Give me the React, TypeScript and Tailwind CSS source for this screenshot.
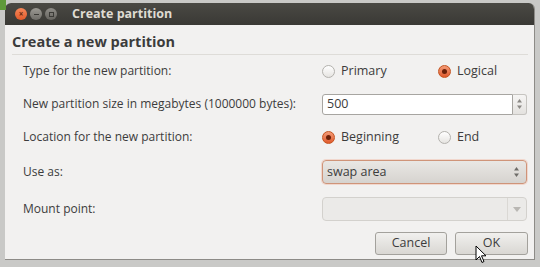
import React from "react";

const font = { fontFamily: "'Open Sans', 'Noto Sans', sans-serif" };

function Radio({ checked, label, w = "w-auto" }: { checked?: boolean; label: string; w?: string }) {
  return (
    <div className={`flex items-center gap-[6px] shrink-0 ${w}`}>
      {checked ? (
        <span className="w-[13px] h-[13px] rounded-full border border-[#c4531f] bg-gradient-to-b from-[#f39b77] to-[#e0592a] flex items-center justify-center">
          <span className="w-[5px] h-[5px] rounded-full bg-[#6a2008]" />
        </span>
      ) : (
        <span className="w-[13px] h-[13px] rounded-full border border-[#b3b1ad] bg-gradient-to-b from-[#ffffff] to-[#e6e4e1]" />
      )}
      <span className="text-[12.5px] text-[#3c3c3c]">{label}</span>
    </div>
  );
}

function Arrows({ color = "#777" }: { color?: string }) {
  return (
    <svg width="7" height="12" viewBox="0 0 7 12">
      <path d="M3.5 1 L6 4.5 L1 4.5 Z" fill={color} />
      <path d="M3.5 11 L6 7.5 L1 7.5 Z" fill={color} />
    </svg>
  );
}

function Row({ label, children, mt }: { label: string; children?: React.ReactNode; mt: string }) {
  return (
    <div className={`flex items-center h-[24px] ${mt}`}>
      <div className="w-[317px] shrink-0 pl-[18px] text-[12px] text-[#3c3c3c] whitespace-nowrap">{label}</div>
      <div className="flex items-center">{children}</div>
    </div>
  );
}

export default function App() {
  return (
    <div className="w-[540px] h-[267px] bg-[#c9c9c7] overflow-hidden relative" style={font}>
      <div className="absolute left-0 top-0 w-[6px] h-[10px] bg-[#5f9a3a]" />
      <div className="ml-[5px] mt-[3px] w-[530px] h-[257px] rounded-t-[6px] bg-[#f2f1f0] border-b border-r border-[#8d8b87] flex flex-col overflow-hidden">
        {/* title bar */}
        <div className="h-[22px] bg-gradient-to-b from-[#4a4944] to-[#3a3935] flex items-center pl-[10px] shrink-0">
          <span className="w-[12px] h-[12px] rounded-full bg-gradient-to-b from-[#f7885a] to-[#e05a2a] flex items-center justify-center text-[8px] leading-none text-[#6b2a10] font-bold">×</span>
          <span className="ml-[3px] w-[12px] h-[12px] rounded-full bg-gradient-to-b from-[#9c9a94] to-[#6f6d68] flex items-center justify-center">
            <span className="w-[5px] h-[1px] bg-[#3c3b37]" />
          </span>
          <span className="ml-[3px] w-[12px] h-[12px] rounded-full bg-gradient-to-b from-[#8f8d88] to-[#66645f] flex items-center justify-center">
            <span className="w-[5px] h-[5px] border border-[#3c3b37]" />
          </span>
          <span className="ml-[15px] text-[12.5px] font-bold text-[#dfdbd2]">Create partition</span>
        </div>

        {/* heading */}
        <div className="pl-[7px] pr-[6px]">
          <div className="h-[28px] flex items-center pt-[6px] text-[14.5px] font-bold text-[#3c3c3c]">Create a new partition</div>
          <div className="h-px bg-[#dedcd8] mt-[1px]" />
        </div>

        <Row label="Type for the new partition:" mt="mt-[4px]">
          <Radio label="Primary" w="w-[116px]" />
          <Radio checked label="Logical" />
        </Row>

        <Row label="New partition size in megabytes (1000000 bytes):" mt="mt-[9px]">
          <div className="flex h-[21px]">
            <div className="w-[191px] h-[21px] bg-white border border-[#a7a5a1] rounded-l-[3px] flex items-center pl-[4px] text-[12.5px] text-[#3c3c3c]">500</div>
            <div className="w-[14px] h-[21px] border border-l-0 border-[#c6c4c0] rounded-r-[3px] bg-gradient-to-b from-[#f6f5f4] to-[#e4e2df] flex items-center justify-center">
              <Arrows color="#8a8884" />
            </div>
          </div>
        </Row>

        <Row label="Location for the new partition:" mt="mt-[9px]">
          <Radio checked label="Beginning" w="w-[116px]" />
          <Radio label="End" />
        </Row>

        <Row label="Use as:" mt="mt-[11px]">
          <div className="w-[205px] h-[24px] rounded-[4px] border border-[#cf9479] bg-gradient-to-b from-[#e9e7e4] to-[#d6d3cf] flex items-center justify-between pl-[4px] pr-[6px] shadow-[0_0_0_1px_rgba(240,140,100,0.25)]">
            <span className="text-[12.5px] text-[#3c3c3c]">swap area</span>
            <Arrows color="#6e6c68" />
          </div>
        </Row>

        <Row label="Mount point:" mt="mt-[13px]">
          <div className="w-[205px] h-[24px] rounded-[4px] border border-[#d3d1cd] bg-[#ebeae8] flex items-center justify-end">
            <div className="w-px h-[22px] bg-[#dad8d4]" />
            <div className="w-[18px] flex items-center justify-center">
              <svg width="8" height="5" viewBox="0 0 8 5">
                <path d="M0 0 L8 0 L4 5 Z" fill="#b9b7b3" />
              </svg>
            </div>
          </div>
        </Row>

        <div className="flex justify-end gap-[8px] pr-[6px] mt-[11px]">
          <button className="w-[72px] h-[23px] rounded-[3px] border border-[#a3a19c] bg-gradient-to-b from-[#f1f0ee] to-[#d9d7d3] text-[12.5px] text-[#3c3c3c]">Cancel</button>
          <button className="w-[73px] h-[23px] rounded-[3px] border border-[#a3a19c] bg-gradient-to-b from-[#f1f0ee] to-[#d9d7d3] text-[12.5px] text-[#3c3c3c]">OK</button>
        </div>
      </div>

      {/* mouse pointer */}
      <svg className="absolute left-[475px] top-[245px]" width="12" height="19" viewBox="0 0 12 19">
        <path d="M1 1 L1 15 L4.5 11.5 L7 17.5 L9 16.5 L6.5 10.8 L11 10.8 Z" fill="#fff" stroke="#000" strokeWidth="1" strokeLinejoin="round" />
      </svg>
    </div>
  );
}
